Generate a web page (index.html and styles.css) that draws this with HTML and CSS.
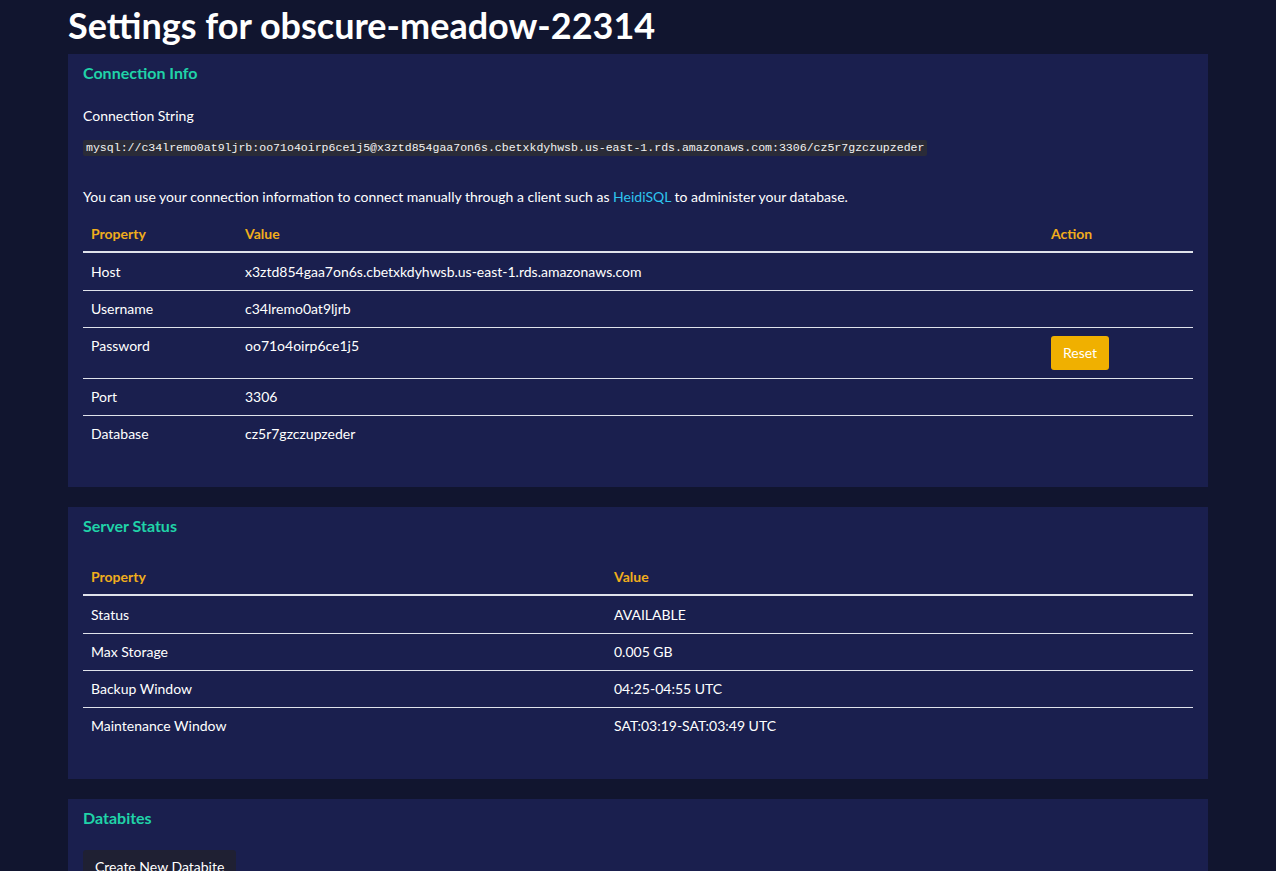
FILE: index.html
```html
<!DOCTYPE html>
<html>
<head>
<meta charset="utf-8">
<title>Settings for obscure-meadow-22314</title>
<link rel="stylesheet" href="styles.css">
</head>
<body>
<div class="container">
  <h1 class="page-title">Settings for obscure-meadow-22314</h1>

  <section class="card">
    <h2 class="card-title">Connection Info</h2>
    <div class="field-label">Connection String</div>
    <div class="code-line"><code>mysql://c34lremo0at9ljrb:oo71o4oirp6ce1j5@x3ztd854gaa7on6s.cbetxkdyhwsb.us-east-1.rds.amazonaws.com:3306/cz5r7gzczupzeder</code></div>
    <p class="info">You can use your connection information to connect manually through a client such as <a href="#">HeidiSQL</a> to administer your database.</p>
    <table class="props">
      <colgroup><col class="c-prop1"><col><col class="c-action"></colgroup>
      <thead><tr><th>Property</th><th>Value</th><th>Action</th></tr></thead>
      <tbody>
        <tr><td>Host</td><td>x3ztd854gaa7on6s.cbetxkdyhwsb.us-east-1.rds.amazonaws.com</td><td></td></tr>
        <tr><td>Username</td><td>c34lremo0at9ljrb</td><td></td></tr>
        <tr><td>Password</td><td>oo71o4oirp6ce1j5</td><td><button class="btn-reset">Reset</button></td></tr>
        <tr><td>Port</td><td>3306</td><td></td></tr>
        <tr><td>Database</td><td>cz5r7gzczupzeder</td><td></td></tr>
      </tbody>
    </table>
  </section>

  <section class="card">
    <h2 class="card-title">Server Status</h2>
    <table class="props status">
      <colgroup><col class="c-prop2"><col></colgroup>
      <thead><tr><th>Property</th><th>Value</th></tr></thead>
      <tbody>
        <tr><td>Status</td><td>AVAILABLE</td></tr>
        <tr><td>Max Storage</td><td>0.005 GB</td></tr>
        <tr><td>Backup Window</td><td>04:25-04:55 UTC</td></tr>
        <tr><td>Maintenance Window</td><td>SAT:03:19-SAT:03:49 UTC</td></tr>
      </tbody>
    </table>
  </section>

  <section class="card">
    <h2 class="card-title">Databites</h2>
    <button class="btn-dark">Create New Databite</button>
  </section>
</div>
</body>
</html>
```

FILE: styles.css
```css
html, body {
  margin: 0;
  padding: 0;
  background: #11152f;
  color: #ffffff;
  font-family: "Lato", "Noto Sans", sans-serif;
  font-size: 14px;
}

.container {
  width: 1140px;
  margin: 0 auto;
}

.page-title {
  margin: 0;
  padding: 3px 0 0 0;
  height: 54px;
  font-size: 36px;
  font-weight: 700;
  line-height: 44px;
  color: #ffffff;
  box-sizing: border-box;
}

.card {
  background: #1a1f4e;
  padding: 9px 15px 15px;
  margin-bottom: 20px;
}

.card-title {
  margin: 0;
  font-size: 16px;
  line-height: 19px;
  font-weight: 700;
  color: #20d3a8;
}

.field-label {
  margin-top: 24px;
  line-height: 20px;
}

.code-line {
  margin-top: 11px;
}

.code-line code {
  display: inline-block;
  font-family: "Liberation Mono", "DejaVu Sans Mono", monospace;
  font-size: 11.55px;
  line-height: 16px;
  padding: 0 3px;
  background: #2a2b38;
  color: #f2f2f2;
  border-radius: 2px;
}

.info {
  margin: 31px 0 0 0;
  line-height: 20px;
}

.info a {
  color: #2ec4f0;
  text-decoration: none;
}

.props {
  width: 100%;
  border-collapse: collapse;
  margin-top: 9px;
  margin-bottom: 20px;
}

.props th {
  text-align: left;
  color: #f0ad1c;
  font-weight: 700;
  padding: 8px 8px 7px;
  line-height: 20px;
  border-bottom: 2px solid #dfe2ea;
}

.props td {
  padding: 8px 8px;
  line-height: 20px;
  vertical-align: top;
  border-top: 1px solid #dfe2ea;
}

.props tbody tr:first-child td {
  border-top: none;
  padding-top: 9px;
}

.c-prop1 { width: 154px; }
.c-action { width: 150px; }
.c-prop2 { width: 523px; }

.status {
  margin-top: 24px;
}

.btn-reset {
  font-family: inherit;
  font-size: 14px;
  color: #ffffff;
  background: #f0b000;
  border: none;
  border-radius: 3px;
  padding: 6px 12px;
  line-height: 22px;
  cursor: pointer;
}

.btn-dark {
  margin-top: 23px;
  font-family: inherit;
  font-size: 14px;
  color: #ffffff;
  background: #1f2033;
  border: none;
  border-radius: 3px;
  padding: 6px 12px;
  line-height: 21px;
}
```
